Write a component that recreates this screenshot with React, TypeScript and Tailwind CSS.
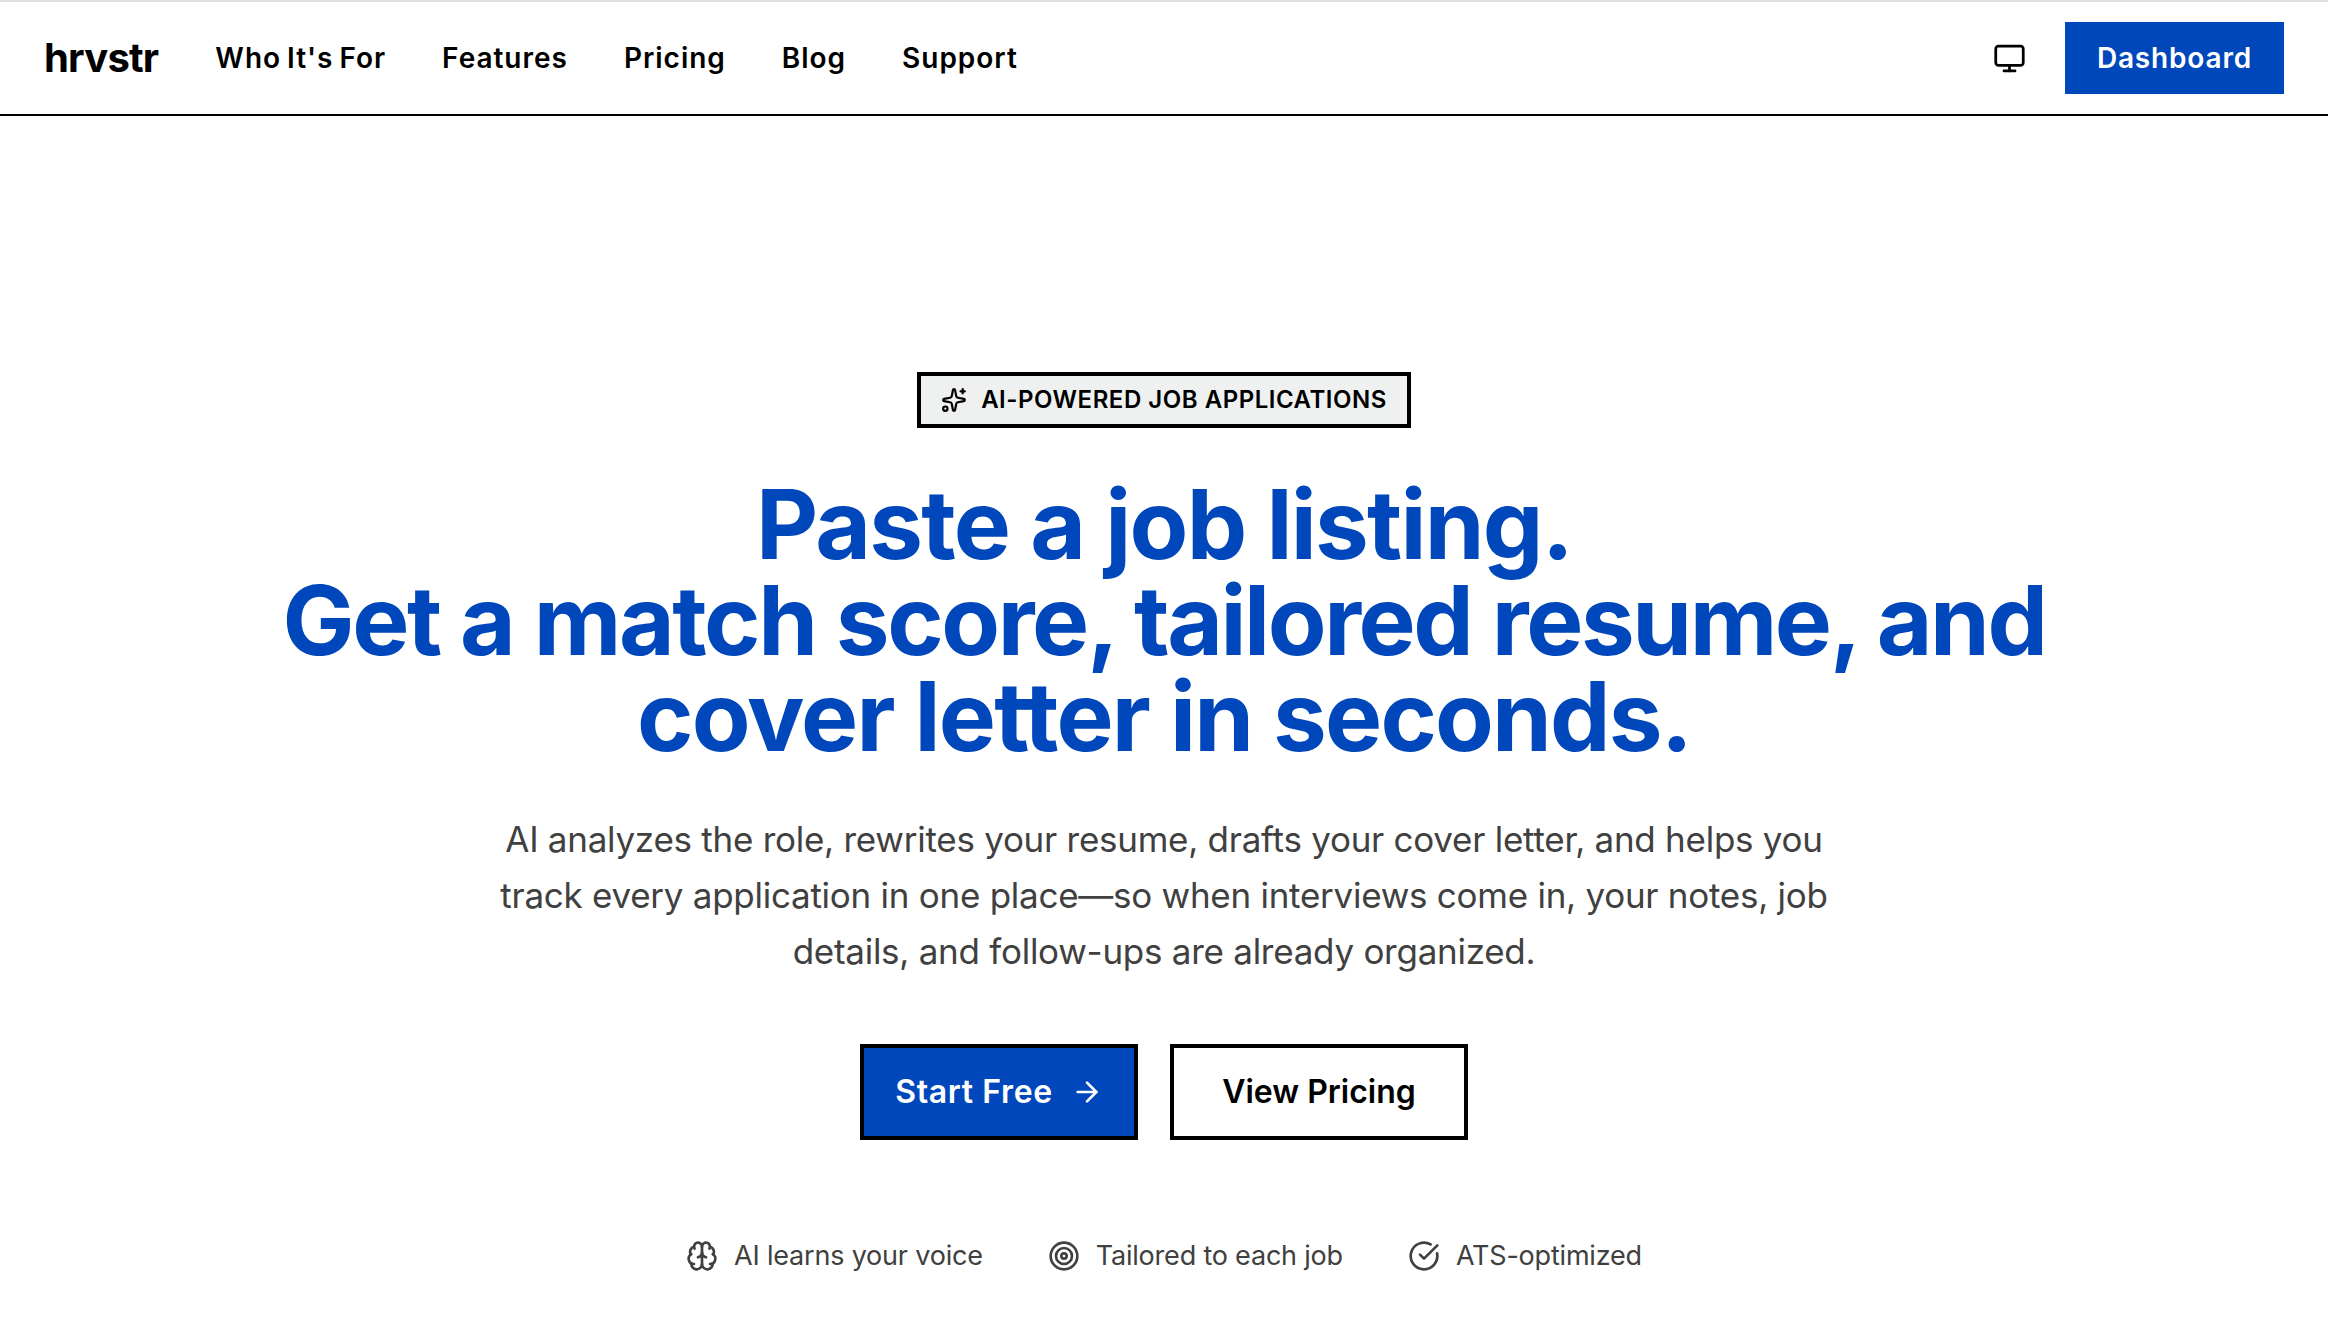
import React from "react";
import { ArrowRight, Brain, CircleCheckBig, Monitor, Sparkles, Target } from "lucide-react";

const navLinks = ["Who It's For", "Features", "Pricing", "Blog", "Support"];

const perks = [
  { label: "AI learns your voice", icon: Brain },
  { label: "Tailored to each job", icon: Target },
  { label: "ATS-optimized", icon: CircleCheckBig },
];

const App: React.FC = () => {
  return (
    <div className="min-h-screen bg-white font-['Inter',sans-serif] text-black">
      <div className="h-[2px] bg-[#e0e0e0]" />
      {/* Nav */}
      <header className="flex h-[114px] items-center justify-between border-b-2 border-black pl-[44px] pr-[44px]">
        <div className="flex items-center gap-[57px]">
          <span className="text-[40px] font-bold tracking-[-0.02em]">hrvstr</span>
          <nav className="flex items-center gap-[56px]">
            {navLinks.map((link) => (
              <a key={link} className="text-[28px] font-semibold tracking-[0.035em] [word-spacing:-2px]">
                {link}
              </a>
            ))}
          </nav>
        </div>
        <div className="flex items-center gap-[39px]">
          <Monitor size={33} strokeWidth={2} />
          <button className="flex h-[72px] w-[219px] items-center justify-center bg-[#0047bb] text-[28px] font-semibold tracking-[0.03em] text-white">
            Dashboard
          </button>
        </div>
      </header>

      {/* Hero */}
      <main className="flex flex-col items-center pt-[256px]">
        <div className="flex h-[56px] w-[494px] items-center justify-center gap-[14px] border-4 border-black bg-[#eff1f0] text-[24px] font-semibold tracking-[0.022em]">
          <Sparkles size={26} strokeWidth={2} />
          AI-POWERED JOB APPLICATIONS
        </div>
        <h1 className="mt-[48px] text-center text-[96px] leading-[96px] font-bold tracking-[-0.025em] text-[#0047bb]">
          <span className="block tracking-[-0.018em]">Paste a job listing.</span>
          <span className="block">Get a match score, tailored resume, and</span>
          <span className="block tracking-[-0.019em]">cover letter in seconds.</span>
        </h1>
        <p className="mt-[47px] w-[1400px] text-center text-[35px] leading-[56px] tracking-[-0.0075em] text-[#404040]">
          AI analyzes the role, rewrites your resume, drafts your cover letter, and helps you
          <br />
          track every application in one place—so when interviews come in, your notes, job
          <br />
          details, and follow-ups are already organized.
        </p>
        <div className="mt-[65px] flex gap-[32px]">
          <button className="flex h-[96px] w-[278px] items-center justify-center gap-[18px] border-4 border-black bg-[#0047bb] text-[32px] font-semibold tracking-[0.02em] text-white">
            Start Free
            <ArrowRight size={32} strokeWidth={2} />
          </button>
          <button className="flex h-[96px] w-[298px] items-center justify-center border-4 border-black bg-white text-[32px] font-semibold">
            View Pricing
          </button>
        </div>
        <div className="mt-[96px] flex items-center gap-[65px] text-[27px] tracking-[-0.0075em] text-[#404040]">
          {perks.map(({ label, icon: Icon }) => (
            <div key={label} className="flex items-center gap-[16px]">
              <Icon size={32} strokeWidth={2} />
              <span>{label}</span>
            </div>
          ))}
        </div>
      </main>
    </div>
  );
};

export default App;
